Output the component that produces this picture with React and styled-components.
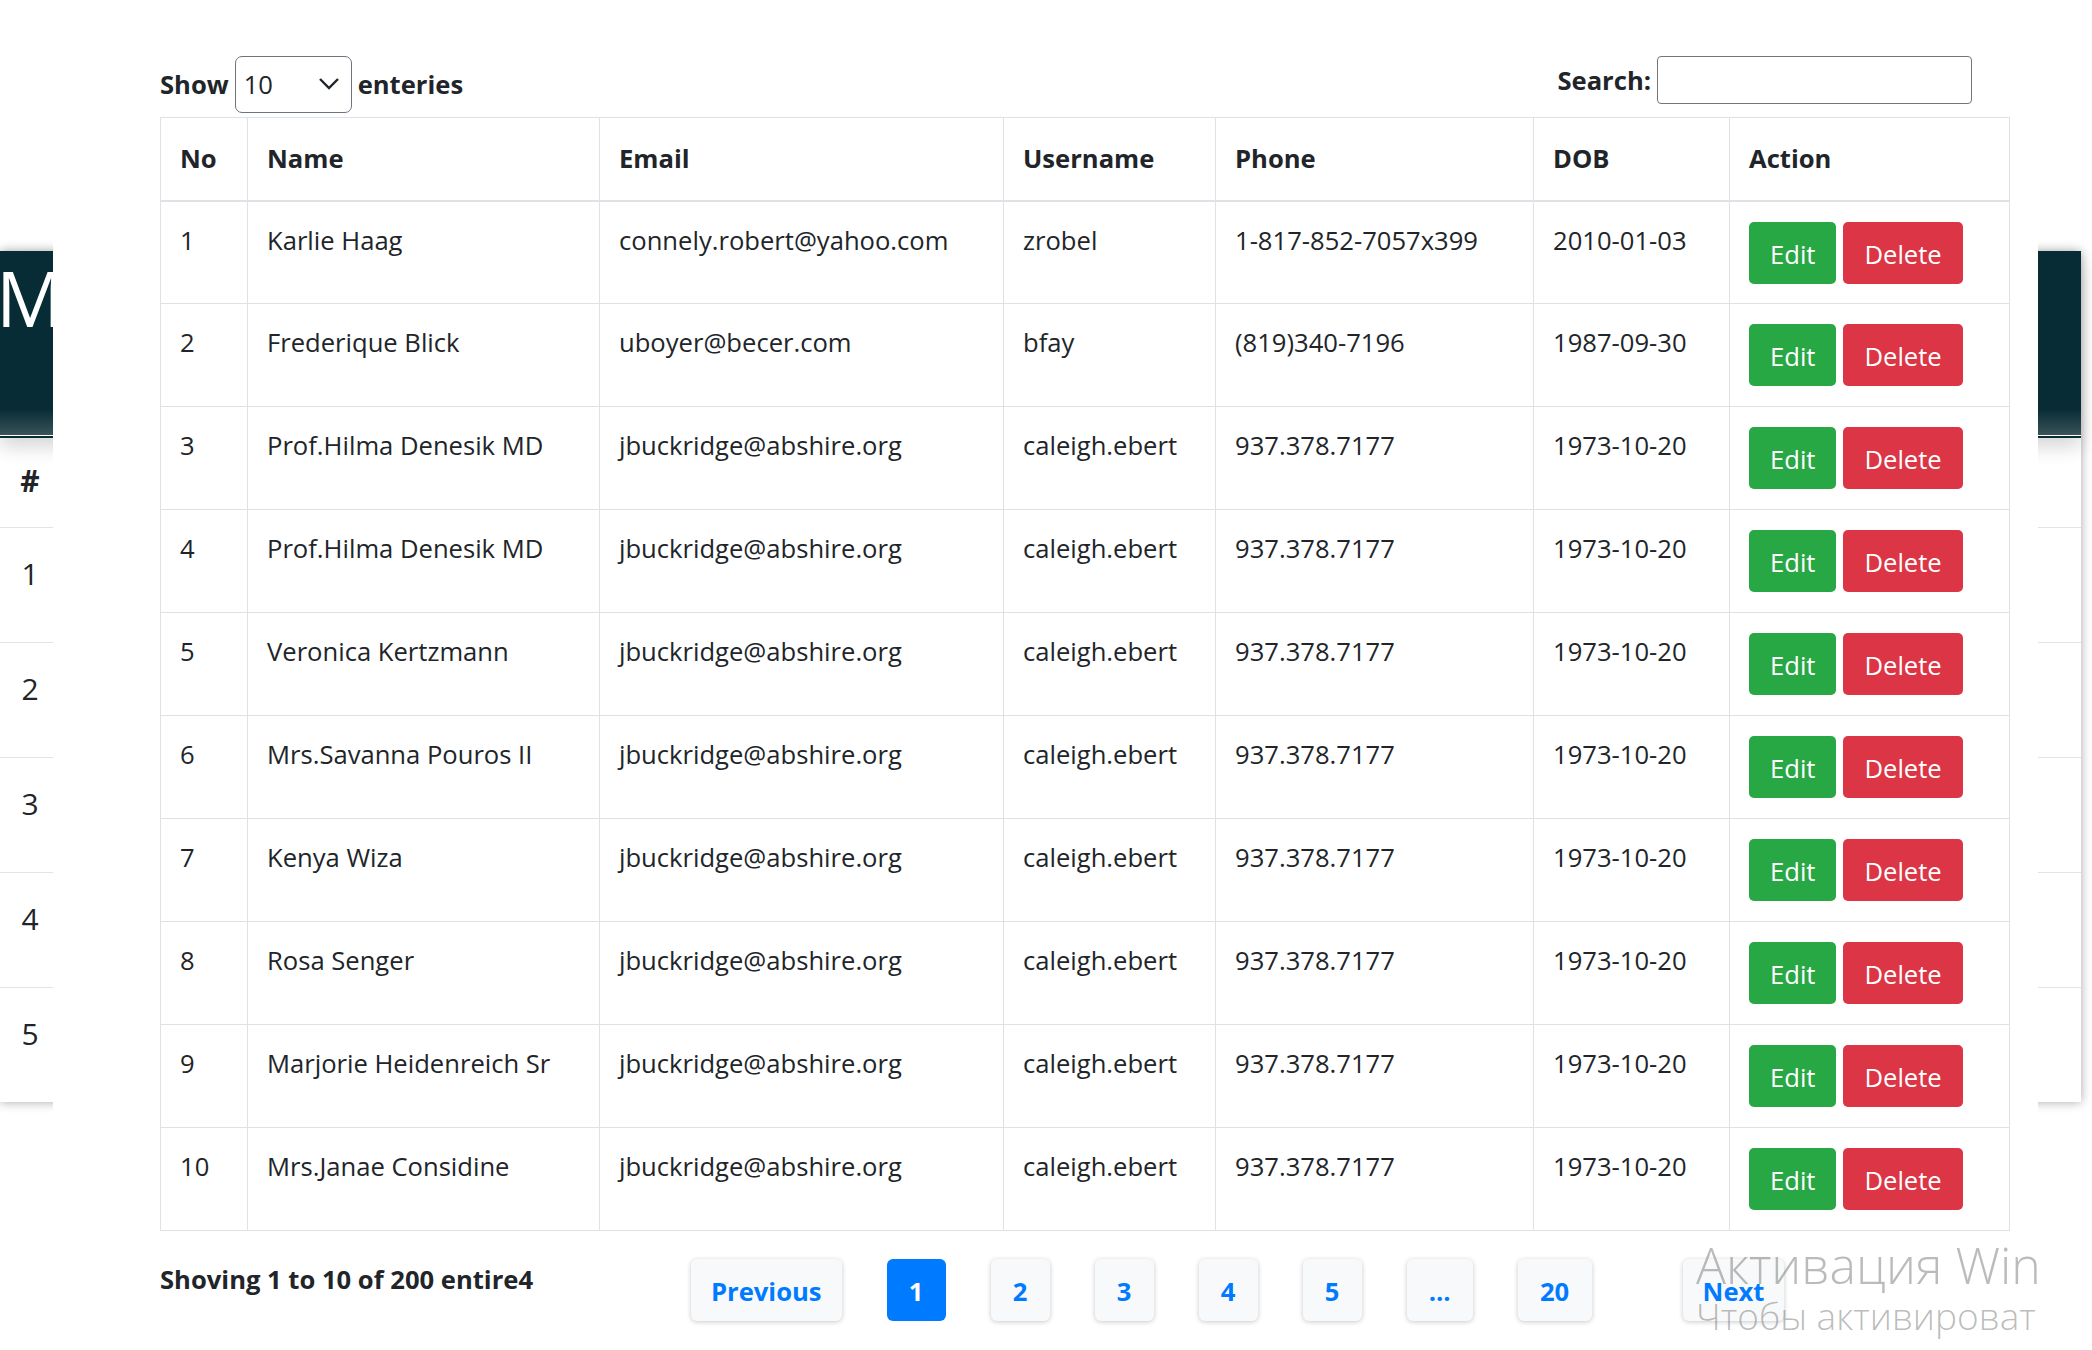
import React from "react";
import styled, { createGlobalStyle } from "styled-components";

const GlobalStyle = createGlobalStyle`
  html, body {
    margin: 0;
    padding: 0;
    background: #fff;
  }
  body {
    width: 2092px;
    height: 1350px;
    overflow: hidden;
    font-family: "Open Sans", "Noto Sans", sans-serif;
    color: #212529;
  }
  * {
    box-sizing: border-box;
  }
`;

const users = [
  [1, "Karlie Haag", "connely.robert@yahoo.com", "zrobel", "1-817-852-7057x399", "2010-01-03"],
  [2, "Frederique Blick", "uboyer@becer.com", "bfay", "(819)340-7196", "1987-09-30"],
  [3, "Prof.Hilma Denesik MD", "jbuckridge@abshire.org", "caleigh.ebert", "937.378.7177", "1973-10-20"],
  [4, "Prof.Hilma Denesik MD", "jbuckridge@abshire.org", "caleigh.ebert", "937.378.7177", "1973-10-20"],
  [5, "Veronica Kertzmann", "jbuckridge@abshire.org", "caleigh.ebert", "937.378.7177", "1973-10-20"],
  [6, "Mrs.Savanna Pouros II", "jbuckridge@abshire.org", "caleigh.ebert", "937.378.7177", "1973-10-20"],
  [7, "Kenya Wiza", "jbuckridge@abshire.org", "caleigh.ebert", "937.378.7177", "1973-10-20"],
  [8, "Rosa Senger", "jbuckridge@abshire.org", "caleigh.ebert", "937.378.7177", "1973-10-20"],
  [9, "Marjorie Heidenreich Sr", "jbuckridge@abshire.org", "caleigh.ebert", "937.378.7177", "1973-10-20"],
  [10, "Mrs.Janae Considine", "jbuckridge@abshire.org", "caleigh.ebert", "937.378.7177", "1973-10-20"],
];

const colWidths = [87, 352, 404, 212, 318, 196, 280];
const pages = ["1", "2", "3", "4", "5", "...", "20"];

/* page behind the modal */

const Page = styled.div`
  padding: 251px 11px 0 0;
`;

const Card = styled.div`
  background: #fff;
  box-shadow: 0 0 10px rgba(0, 0, 0, 0.35);
`;

const CardHeader = styled.div`
  position: relative;
  z-index: 1;
  height: 184px;
  padding: 9px 0 0 0;
  background: linear-gradient(to bottom, #072c35 0%, #072c35 86%, #3a5358 100%);
  box-shadow: 0 1px 0 #fff, 0 3px 0 #072c35, 0 12px 18px rgba(0, 0, 0, 0.16);
`;

const CardTitle = styled.h1`
  margin: 0 0 0 -4px;
  font-size: 76px;
  font-weight: 400;
  line-height: 1;
  color: #fff;
  white-space: nowrap;
`;

const BgTable = styled.table`
  width: 100%;
  border-collapse: collapse;
  font-size: 30px;
`;

const BgRow = styled.tr`
  height: ${(p) => (p.$head ? 92 : 115)}px;
  border-bottom: 1px solid #e3e3e3;
  &:last-child {
    border-bottom: none;
  }
`;

const BgCell = styled.td`
  width: 60px;
  padding: 23px 0 0 0;
  vertical-align: top;
  text-align: center;
  font-weight: ${(p) => (p.$head ? 700 : 400)};
  line-height: 45px;
`;

/* modal */

const Modal = styled.div`
  position: fixed;
  z-index: 10;
  top: 0;
  left: 53px;
  width: 1985px;
  height: 1350px;
  padding: 56px 29px 0 107px;
  background: #fff;
  overflow: hidden;
`;

const Toolbar = styled.div`
  display: flex;
  justify-content: space-between;
  align-items: flex-start;
  margin-bottom: 4px;
`;

const Group = styled.div`
  display: flex;
  align-items: center;
  gap: 6px;
  margin-right: ${(p) => p.$right || 0}px;
  font-size: 25.6px;
  font-weight: 700;
`;

const SelectWrap = styled.div`
  position: relative;
  width: 117px;
  height: 57px;
`;

const Select = styled.select`
  appearance: none;
  width: 100%;
  height: 100%;
  padding: 0 0 0 8px;
  border: 1px solid #6c757d;
  border-radius: 7px;
  background: #fff;
  font-family: "Open Sans", "Noto Sans", sans-serif;
  font-size: 25.6px;
  color: #212529;
`;

const Chevron = styled.svg`
  position: absolute;
  right: 12px;
  top: 21px;
  pointer-events: none;
`;

const SearchInput = styled.input`
  width: 315px;
  height: 48px;
  border: 1px solid #767676;
  border-radius: 4px;
  font-size: 25.6px;
`;

const Table = styled.table`
  width: 1849px;
  table-layout: fixed;
  border-collapse: collapse;
  border: 1px solid #dee2e6;
  font-size: 25.6px;
`;

const HeadCell = styled.th`
  height: 83px;
  padding: 0 19px;
  border: 1px solid #dee2e6;
  border-bottom-width: 2px;
  text-align: left;
  vertical-align: middle;
  font-weight: 700;
`;

const Cell = styled.td`
  height: 103px;
  padding: 20px 19px 0;
  border: 1px solid #dee2e6;
  vertical-align: top;
  line-height: 38px;
  white-space: nowrap;
`;

const Actions = styled.div`
  display: flex;
  gap: 7px;
`;

const ActionButton = styled.button`
  height: 62px;
  padding: 3px 21px 0;
  border: none;
  border-radius: 5px;
  background: ${(p) => (p.$danger ? "#dc3545" : "#28a745")};
  color: #fff;
  font-family: "Open Sans", "Noto Sans", sans-serif;
  font-size: 25.6px;
`;

const Footer = styled.div`
  display: flex;
  align-items: flex-start;
  margin-top: 28px;
`;

const Info = styled.div`
  width: 531px;
  padding-top: 2px;
  font-size: 25.6px;
  font-weight: 700;
  line-height: 38px;
`;

const Pager = styled.div`
  display: flex;
  gap: 45px;
`;

const PageButton = styled.button`
  height: 62px;
  min-width: ${(p) => p.$min || 59}px;
  padding: 2px 20px 0;
  margin-left: ${(p) => p.$push || 0}px;
  border: none;
  border-radius: 6px;
  background: ${(p) => (p.$active ? "#007bff" : "#f8f9fa")};
  color: ${(p) => (p.$active ? "#fff" : "#007bff")};
  box-shadow: ${(p) => (p.$active ? "none" : "0 1px 5px rgba(0, 0, 0, 0.22)")};
  font-family: "Open Sans", "Noto Sans", sans-serif;
  font-size: 25.6px;
  font-weight: 700;
`;

const Watermark = styled.div`
  position: absolute;
  left: 1643px;
  top: 1236px;
  color: rgba(105, 105, 105, 0.45);
  white-space: nowrap;
  pointer-events: none;
`;

const WatermarkTitle = styled.div`
  font-size: 50px;
  font-weight: 300;
  line-height: 58px;
`;

const WatermarkText = styled.div`
  font-size: 37px;
  font-weight: 300;
  line-height: 44px;
`;

export default function App() {
  return (
    <>
      <GlobalStyle />
      <Page>
        <Card>
          <CardHeader>
            <CardTitle>Manage Users</CardTitle>
          </CardHeader>
          <BgTable>
            <tbody>
              <BgRow $head>
                <BgCell $head>#</BgCell>
                <td />
              </BgRow>
              {[1, 2, 3, 4, 5].map((n) => (
                <BgRow key={n}>
                  <BgCell>{n}</BgCell>
                  <td />
                </BgRow>
              ))}
            </tbody>
          </BgTable>
        </Card>
      </Page>

      <Modal>
        <Toolbar>
          <Group>
            Show
            <SelectWrap>
              <Select defaultValue="10">
                <option>10</option>
                <option>20</option>
                <option>30</option>
              </Select>
              <Chevron width="22" height="14" viewBox="0 0 22 14">
                <path d="M2 2 L11 11 L20 2" fill="none" stroke="#212529" strokeWidth="2.4" />
              </Chevron>
            </SelectWrap>
            enteries
          </Group>
          <Group $right={37}>
            Search:
            <SearchInput />
          </Group>
        </Toolbar>

        <Table>
          <colgroup>
            {colWidths.map((w, i) => (
              <col key={i} style={{ width: w }} />
            ))}
          </colgroup>
          <thead>
            <tr>
              <HeadCell>No</HeadCell>
              <HeadCell>Name</HeadCell>
              <HeadCell>Email</HeadCell>
              <HeadCell>Username</HeadCell>
              <HeadCell>Phone</HeadCell>
              <HeadCell>DOB</HeadCell>
              <HeadCell>Action</HeadCell>
            </tr>
          </thead>
          <tbody>
            {users.map((u) => (
              <tr key={u[0]}>
                {u.map((v, i) => (
                  <Cell key={i}>{v}</Cell>
                ))}
                <Cell>
                  <Actions>
                    <ActionButton>Edit</ActionButton>
                    <ActionButton $danger>Delete</ActionButton>
                  </Actions>
                </Cell>
              </tr>
            ))}
          </tbody>
        </Table>

        <Footer>
          <Info>Shoving 1 to 10 of 200 entire4</Info>
          <Pager>
            <PageButton>Previous</PageButton>
            {pages.map((p) => (
              <PageButton key={p} $active={p === "1"} $min={p === "..." ? 66 : p === "20" ? 74 : 59}>
                {p}
              </PageButton>
            ))}
            <PageButton $push={46}>Next</PageButton>
          </Pager>
        </Footer>

        <Watermark>
          <WatermarkTitle>Активация Windows</WatermarkTitle>
          <WatermarkText>Чтобы активировать Windows, перейдите в раздел "Параметры".</WatermarkText>
        </Watermark>
      </Modal>
    </>
  );
}
